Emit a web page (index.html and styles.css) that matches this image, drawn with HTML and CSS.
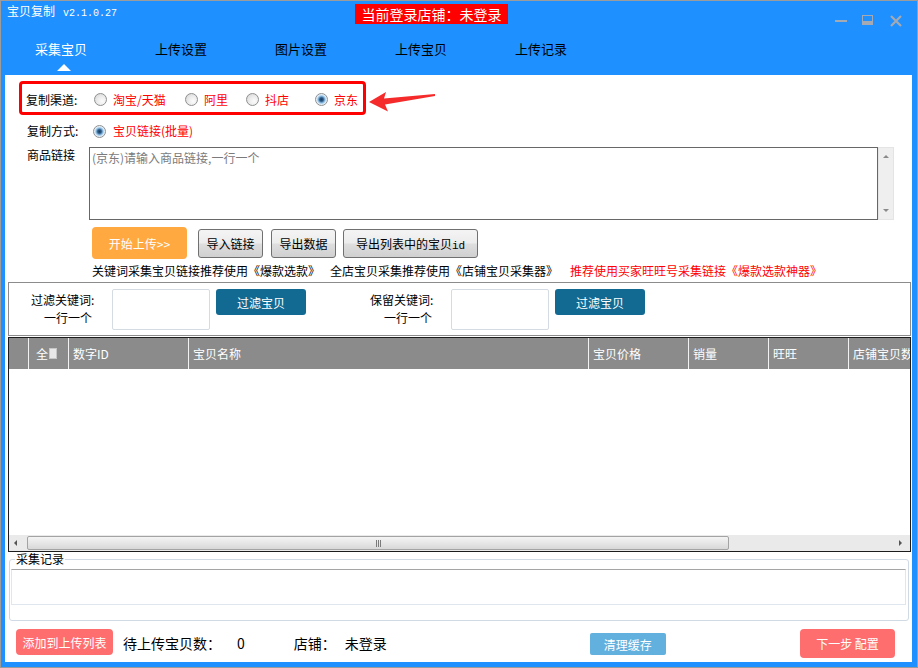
FILE: index.html
```html
<!DOCTYPE html>
<html lang="zh-CN">
<head>
<meta charset="utf-8">
<title>宝贝复制</title>
<link rel="stylesheet" href="styles.css">
</head>
<body>
<div class="window">
  <div class="titlebar">
    <div class="app-title"><span class="app-name">宝贝复制</span><span class="app-ver">v2.1.0.27</span></div>
    <div class="login-badge">当前登录店铺：未登录</div>
    <div class="win-ctrls">
      <svg class="ctrl-min" width="12" height="12" viewBox="0 0 12 12"><rect x="0" y="5" width="12" height="2" fill="#a3aab4"/></svg>
      <svg class="ctrl-max" width="12" height="12" viewBox="0 0 12 12"><rect x="0.5" y="0.5" width="10" height="9" fill="none" stroke="#a3aab4"/><rect x="0" y="6" width="11" height="4" fill="#a3aab4"/></svg>
      <svg class="ctrl-close" width="12" height="12" viewBox="0 0 12 12"><path d="M1 1L11 11M11 1L1 11" stroke="#a3aab4" stroke-width="2.2"/></svg>
    </div>
  </div>
  <div class="tabs">
    <div class="tab active">采集宝贝</div>
    <div class="tab">上传设置</div>
    <div class="tab">图片设置</div>
    <div class="tab">上传宝贝</div>
    <div class="tab">上传记录</div>
  </div>
  <div class="content">
    <div class="channel-box">
      <span class="field-label">复制渠道:</span>
      <span class="opt opt-1"><span class="radio"></span>淘宝/天猫</span>
      <span class="opt opt-2"><span class="radio"></span>阿里</span>
      <span class="opt opt-3"><span class="radio"></span>抖店</span>
      <span class="opt"><span class="radio on"></span>京东</span>
    </div>
    <svg class="pointer-arrow" width="70" height="24" viewBox="0 0 70 24"><polygon points="1,12 18,2 16,8.5 67,4 67,6 17,14.5 20,21.5" fill="#f52a2a"/></svg>

    <div class="mode-row">
      <span class="field-label">复制方式:</span>
      <span class="radio on"></span><span class="red">宝贝链接(批量)</span>
    </div>

    <div class="link-row">
      <span class="field-label">商品链接</span>
      <textarea class="link-input" placeholder="(京东)请输入商品链接,一行一个"></textarea>
      <div class="vscroll"><span class="arr-up"></span><span class="arr-down"></span></div>
    </div>

    <div class="btn-row">
      <button class="btn-start">开始上传&gt;&gt;</button>
      <button class="btn-gray btn-import">导入链接</button>
      <button class="btn-gray btn-export">导出数据</button>
      <button class="btn-gray btn-export-id">导出列表中的宝贝<span class="mono">id</span></button>
    </div>

    <div class="rec-row">
      <span class="rec1">关键词采集宝贝链接推荐使用《爆款选款》</span><span class="rec2">全店宝贝采集推荐使用《店铺宝贝采集器》</span><span class="red">推荐使用买家旺旺号采集链接《爆款选款神器》</span>
    </div>

    <div class="filter-panel">
      <div class="kw-label"><div>过滤关键词:</div><div class="l2">一行一个</div></div>
      <div class="kw-input"></div>
      <button class="btn-filter">过滤宝贝</button>
      <div class="kw-label kw-label-2"><div>保留关键词:</div><div class="l2">一行一个</div></div>
      <div class="kw-input"></div>
      <button class="btn-filter">过滤宝贝</button>
    </div>

    <div class="grid">
      <div class="grid-head">
        <div class="th"></div>
        <div class="th th-check">全<span class="chk"></span></div>
        <div class="th">数字ID</div>
        <div class="th">宝贝名称</div>
        <div class="th">宝贝价格</div>
        <div class="th">销量</div>
        <div class="th">旺旺</div>
        <div class="th">店铺宝贝数</div>
      </div>
      <div class="grid-body"></div>
      <div class="hscroll">
        <span class="arr-left"></span>
        <div class="thumb"><span class="grip"></span></div>
        <span class="arr-right"></span>
      </div>
    </div>

    <fieldset class="log">
      <legend>采集记录</legend>
      <div class="log-box"></div>
    </fieldset>

    <div class="bottom">
      <button class="btn-add">添加到上传列表</button>
      <span class="stat stat-label">待上传宝贝数：</span>
      <span class="stat stat-num">0</span>
      <span class="stat shop-label">店铺：</span>
      <span class="stat shop-name">未登录</span>
      <button class="btn-clear">清理缓存</button>
      <button class="btn-next">下一步 配置</button>
    </div>
  </div>
</div>
</body>
</html>
```
FILE: styles.css
```css
* { box-sizing: border-box; }
html, body { margin: 0; padding: 0; }
body {
  width: 918px; height: 668px; overflow: hidden;
  font-family: "Noto Sans CJK SC", "Liberation Sans", sans-serif;
  font-size: 12px; color: #000; background: #fff;
}
button {
  font-family: inherit; font-size: 12px; padding: 0; margin: 0;
  border: 0; cursor: default; white-space: nowrap;
}
.red { color: #f00; }
.mono { font-family: "Liberation Mono", monospace; font-size: 11px; }

.window {
  width: 918px; height: 668px;
  border: 1px solid #9c9c9c;
  background: #1e90ff;
  display: flex; flex-direction: column;
}

/* title bar */
.titlebar { height: 29px; flex: none; display: flex; align-items: flex-start; padding-right: 15px; }
.app-title { width: 354px; padding: 3px 0 0 6px; color: #fff; line-height: 14px; white-space: nowrap; }
.app-name { font-size: 12px; }
.app-ver { font-family: "Liberation Mono", monospace; font-size: 10px; margin-left: 8px; }
.login-badge {
  margin-top: 3px; width: 153px; height: 20px;
  background: #ff0000; color: #fff;
  font-size: 14px; line-height: 20px; text-align: center; white-space: nowrap;
}
.win-ctrls { margin-left: auto; display: flex; padding-top: 14px; }
.win-ctrls svg { display: block; }
.ctrl-max { margin-left: 15px; }
.ctrl-close { margin-left: 16px; }

/* tabs */
.tabs { height: 45px; flex: none; display: flex; }
.tab {
  width: 120px; position: relative; text-align: center;
  font-size: 13px; line-height: 16px; padding-top: 11px; color: #000;
}
.tab.active { color: #fff; }
.tab.active::after {
  content: ""; position: absolute; left: 56px; bottom: 4px;
  border-left: 7px solid transparent; border-right: 7px solid transparent;
  border-bottom: 7px solid #fff;
}

/* content */
.content {
  flex: none; height: 587px; margin: 0 5px 0 4px;
  background: #fff; position: relative;
  display: flex; flex-direction: column; align-items: flex-start;
}
.field-label { line-height: 14px; white-space: nowrap; flex: none; }

.channel-box {
  margin: 6px 0 0 14px; width: 347px; height: 34px;
  border: 3px solid #f00; border-radius: 4px;
  display: flex; align-items: center; padding: 3px 0 0 4px;
}
.channel-box .field-label { width: 68px; }
.opt { display: flex; align-items: center; color: #f00; line-height: 14px; white-space: nowrap; }
.opt .radio { margin-right: 6px; }
.opt-1 { width: 91px; }
.opt-2 { width: 61px; }
.opt-3 { width: 69px; }

.radio {
  width: 13px; height: 13px; flex: none; border-radius: 50%;
  border: 1px solid #8e8f8f;
  background: radial-gradient(circle at 65% 65%, #fbfbfb 0, #ececec 45%, #d2d2d2 100%);
}
.radio.on {
  background: radial-gradient(circle, #1d3b5c 0, #2b5a86 1.8px, #7fb0d8 3.2px, #cfe5f6 4.5px, #eef4fa 5.5px);
}

.pointer-arrow { position: absolute; left: 363px; top: 15px; }

.mode-row { margin: 7px 0 0 22px; height: 18px; display: flex; align-items: center; line-height: 14px; }
.mode-row .field-label { width: 66px; }
.mode-row .radio { margin-right: 7px; }

.link-row { margin: 7px 0 0 22px; display: flex; }
.link-row .field-label { width: 62px; padding-top: 1px; }
.link-input {
  width: 789px; height: 73px; margin: 0;
  border: 1px solid #676767; border-radius: 0;
  resize: none; overflow: hidden; outline: none;
  padding: 3px 2px;
  font-family: "Noto Sans CJK SC", "Liberation Sans", sans-serif;
  font-size: 12px; line-height: 14px;
}
.link-input::placeholder { color: #7b7b7b; }
.vscroll {
  width: 16px; height: 73px; background: #efefef; border: 1px solid #e4e4e4;
  display: flex; flex-direction: column; justify-content: space-between; align-items: center;
  padding: 7px 0 7px;
}
.arr-up { width: 0; height: 0; border-left: 3px solid transparent; border-right: 3px solid transparent; border-bottom: 3px solid #8a8a8a; }
.arr-down { width: 0; height: 0; border-left: 3px solid transparent; border-right: 3px solid transparent; border-top: 3px solid #8a8a8a; }

.btn-row { margin: 7px 0 0 87px; display: flex; align-items: flex-start; }
.btn-start {
  width: 95px; height: 32px; background: #ffa940; color: #fff;
  border-radius: 4px; font-size: 12px;
}
.btn-gray {
  height: 29px; margin-top: 2px; color: #000;
  border: 1px solid #707070; border-radius: 3px;
  background: linear-gradient(#f4f4f4, #ececec 48%, #dedede 52%, #d0d0d0);
}
.btn-import { width: 65px; margin-left: 11px; }
.btn-export { width: 65px; margin-left: 8px; }
.btn-export-id { width: 135px; margin-left: 7px; }

.rec-row { margin: 5px 0 0 87px; line-height: 14px; white-space: nowrap; }
.rec1 { display: inline-block; width: 238px; }
.rec2 { display: inline-block; width: 240px; }

/* filter panel */
.filter-panel {
  margin: 4px 0 0 3px; width: 903px; height: 54px;
  border: 1px solid #8c8c8c;
  display: flex; align-items: flex-start; padding-top: 6px;
}
.kw-label { margin-left: 22px; width: 81px; padding-top: 2px; line-height: 18px; white-space: nowrap; }
.kw-label .l2 { padding-left: 13px; }
.kw-label-2 { margin-left: 64px; }
.kw-label-2 .l2 { padding-left: 14px; }
.kw-input { width: 98px; height: 41px; border: 1px solid #d5dbe3; border-radius: 2px; background: #fff; }
.btn-filter {
  margin-left: 6px; width: 90px; height: 26px;
  background: #126a92; color: #fff; border-radius: 3px;
}

/* grid */
.grid {
  margin: 1px 0 0 3px; width: 903px; height: 215px;
  border: 1px solid #1c1c1c;
  display: flex; flex-direction: column;
}
.grid-head {
  height: 31px; flex: none; background: #8b8b8b;
  display: grid; grid-template-columns: 19px 40px 120px 400px 100px 80px 80px 1fr;
}
.th {
  border-left: 1px solid #f2f2f2; padding-left: 4px;
  color: #fff; line-height: 31px; white-space: nowrap; overflow: hidden;
}
.th:first-child { border-left: 0; }
.th-check { padding-left: 7px; display: flex; align-items: center; }
.chk { width: 8px; height: 11px; margin-left: 1px; background: #e8e8e8; border: 1px solid #c6c6c6; }
.grid-body { flex: 1; background: #fff; }
.hscroll { height: 16px; flex: none; background: #eaeaea; display: flex; align-items: center; }
.arr-left { margin-left: 5px; width: 0; height: 0; border-top: 3px solid transparent; border-bottom: 3px solid transparent; border-right: 3px solid #555; }
.arr-right { margin-left: auto; margin-right: 8px; width: 0; height: 0; border-top: 3px solid transparent; border-bottom: 3px solid transparent; border-left: 3px solid #555; }
.thumb {
  margin-left: 10px; width: 702px; height: 14px;
  border: 1px solid #a3a3a3; border-radius: 2px;
  background: linear-gradient(#f4f4f4, #e6e6e6 50%, #d8d8d8);
  display: flex; align-items: center; justify-content: center;
}
.grip { width: 5px; height: 7px; background: repeating-linear-gradient(90deg, #7a7a7a 0 1px, transparent 1px 2px); }

/* log */
.log {
  margin: 0 0 0 4px; width: 900px; min-width: 0;
  border: 1px solid #cfdae5; border-radius: 3px;
  padding: 0 2px 15px 1px;
}
.log legend { padding: 0 1px; margin-left: 4px; line-height: 14px; font-size: 12px; }
.log-box { height: 36px; margin-top: 3px; border: 1px solid #dfe6ee; border-top-color: #a5a5a5; }

/* bottom bar */
.bottom { margin: 8px 0 0 11px; width: 896px; display: flex; align-items: flex-start; }
.btn-add { width: 97px; height: 26px; background: #ff6e6e; color: #fff; border-radius: 4px; }
.stat { font-size: 14px; line-height: 28px; white-space: nowrap; }
.stat-label { margin-left: 10px; }
.stat-num { margin-left: 16px; }
.shop-label { margin-left: 49px; }
.shop-name { margin-left: 9px; }
.btn-clear { margin: 4px 0 0 203px; width: 76px; height: 22px; background: #62b0de; color: #fff; border-radius: 2px; }
.btn-next { margin-left: auto; margin-right: 17px; width: 95px; height: 29px; background: #ff6e6e; color: #fff; border-radius: 4px; }
```
